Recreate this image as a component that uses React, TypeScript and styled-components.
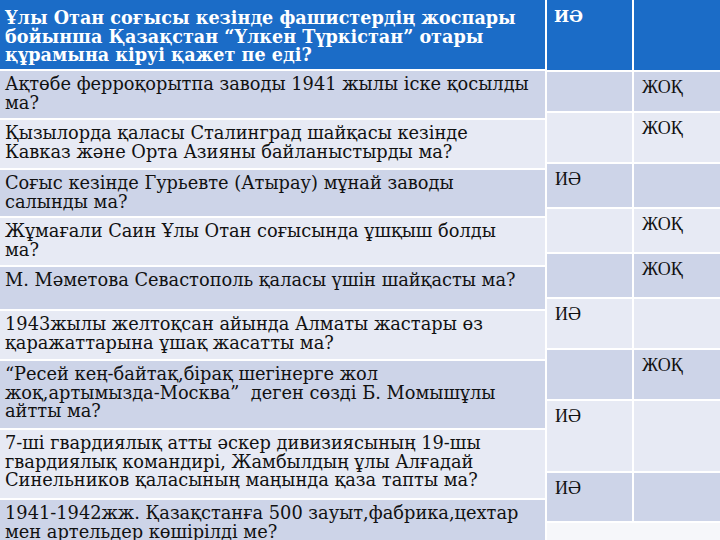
import styled, { createGlobalStyle } from "styled-components";

const GlobalStyle = createGlobalStyle`
  html, body {
    margin: 0;
    padding: 0;
    width: 720px;
    height: 540px;
    overflow: hidden;
    background: #ffffff;
  }
`;

const Page = styled.div`
  display: flex;
  gap: 2px;
  width: 720px;
  height: 540px;
  overflow: hidden;
  background: #ffffff;
`;

const QuestionTable = styled.div`
  width: 545px;
  flex: none;
  display: flex;
  flex-direction: column;
  gap: 2px;
`;

const AnswerTable = styled.div`
  flex: 1;
  display: flex;
  flex-direction: column;
  gap: 2px;
`;

const HeaderCell = styled.div<{ $h: number }>`
  height: ${(p) => p.$h}px;
  flex: none;
  box-sizing: border-box;
  background: #1b6cc7;
  color: #ffffff;
  font-family: "DejaVu Serif", "Liberation Serif", serif;
  font-weight: bold;
  font-size: 17.6px;
  line-height: 18.5px;
  padding: 9px 0 0 5px;
  white-space: pre;
  overflow: hidden;
`;

const QuestionCell = styled.div<{ $h: number; $dark: boolean }>`
  height: ${(p) => p.$h}px;
  flex: none;
  box-sizing: border-box;
  background: ${(p) => (p.$dark ? "#cdd4e8" : "#e7eaf4")};
  color: #111111;
  font-family: "DejaVu Serif", "Liberation Serif", serif;
  font-size: 17.8px;
  line-height: 18.6px;
  padding: 4px 0 0 5px;
  white-space: pre;
  overflow: hidden;
`;

const AnswerRow = styled.div<{ $h: number }>`
  height: ${(p) => p.$h}px;
  flex: none;
  display: grid;
  grid-template-columns: 85px 1fr;
  gap: 2px;
`;

const HeadMark = styled.div`
  background: #1b6cc7;
  color: #ffffff;
  font-family: "DejaVu Serif", "Liberation Serif", serif;
  font-weight: bold;
  font-size: 16px;
  line-height: 18px;
  padding: 8px 0 0 7px;
`;

const Mark = styled.div<{ $dark: boolean }>`
  background: ${(p) => (p.$dark ? "#cdd4e8" : "#e7eaf4")};
  color: #111111;
  font-family: "Liberation Serif", "DejaVu Serif", serif;
  font-size: 18px;
  line-height: 20px;
  padding: 5px 0 0 8px;
`;

const FadedRow = styled.div`
  flex: 1;
  background: #f6f7fa;
`;

const header =
  "Ұлы Отан соғысы кезінде фашистердің жоспары\nбойынша Қазақстан “Үлкен Түркістан” отары\nқұрамына кіруі қажет пе еді?";

const questions = [
  { h: 47, text: "Ақтөбе ферроқорытпа заводы 1941 жылы іске қосылды\nма?" },
  { h: 48, text: "Қызылорда қаласы Сталинград шайқасы кезінде\nКавказ және Орта Азияны байланыстырды ма?" },
  { h: 46, text: "Соғыс кезінде Гурьевте (Атырау) мұнай заводы\nсалынды ма?" },
  { h: 47, text: "Жұмағали Саин Ұлы Отан соғысында ұшқыш болды\nма?" },
  { h: 42, text: "М. Мәметова Севастополь қаласы үшін шайқасты ма?" },
  { h: 48, text: "1943жылы желтоқсан айында Алматы жастары өз\nқаражаттарына ұшақ жасатты ма?" },
  { h: 67, text: "“Ресей кең-байтақ,бірақ шегінерге жол\nжоқ,артымызда-Москва”  деген сөзді Б. Момышұлы\nайтты ма?" },
  { h: 68, text: "7-ші гвардиялық атты әскер дивизиясының 19-шы\nгвардиялық командирі, Жамбылдың ұлы Алғадай\nСинельников қаласының маңында қаза тапты ма?" },
  { h: 60, text: "1941-1942жж. Қазақстанға 500 зауыт,фабрика,цехтар\nмен артельдер көшірілді ме?" },
];

const answers: { h: number; yes: boolean }[] = [
  { h: 39, yes: false },
  { h: 49, yes: false },
  { h: 43, yes: true },
  { h: 43, yes: false },
  { h: 43, yes: false },
  { h: 49, yes: true },
  { h: 49, yes: false },
  { h: 70, yes: true },
  { h: 48, yes: true },
];

const App = () => {
  return (
    <>
      <GlobalStyle />
      <Page>
        <QuestionTable>
          <HeaderCell $h={69}>{header}</HeaderCell>
          {questions.map((q, i) => (
            <QuestionCell key={i} $h={q.h} $dark={i % 2 === 0}>
              {q.text}
            </QuestionCell>
          ))}
        </QuestionTable>
        <AnswerTable>
          <AnswerRow $h={70}>
            <HeadMark>ИӘ</HeadMark>
            <HeadMark />
          </AnswerRow>
          {answers.map((a, i) => (
            <AnswerRow key={i} $h={a.h}>
              <Mark $dark={i % 2 === 0}>{a.yes ? "ИӘ" : ""}</Mark>
              <Mark $dark={i % 2 === 0}>{a.yes ? "" : "ЖОҚ"}</Mark>
            </AnswerRow>
          ))}
          <FadedRow />
        </AnswerTable>
      </Page>
    </>
  );
};

export default App;
